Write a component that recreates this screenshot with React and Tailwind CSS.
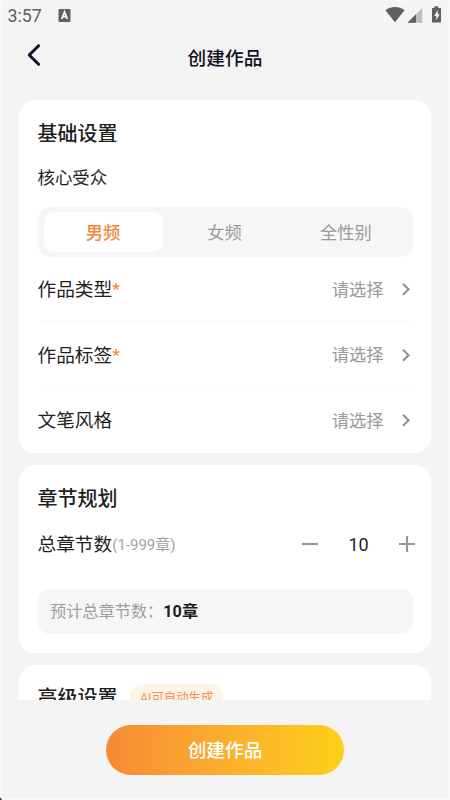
import { useState } from "react";

const audiences = ["男频", "女频", "全性别"];

const options = [
    { label: "作品类型", required: true },
    { label: "作品标签", required: true },
    { label: "文笔风格", required: false },
];

const StatusBar = () => {
    return (
        <div className="flex h-[30px] shrink-0 items-center justify-between pl-[7.5px] pr-2 text-[#606060]">
            <div className="flex items-center gap-[16px]">
                <span className="pt-px font-[Roboto] text-[17.8px] leading-[30px]">3:57</span>
                <svg width="13" height="13" viewBox="0 0 13 13">
                    <rect x="0.5" y="0" width="12" height="13" rx="1" fill="#606060" />
                    <path d="M3.8 9.8L6.5 3L9.2 9.8M4.8 7.6H8.2" fill="none" stroke="#f4f4f4" strokeWidth="1.8" />
                </svg>
            </div>
            <svg width="57" height="18" viewBox="0 0 57 18">
                <path d="M0.4 4.2C6.2 -0.2 13.8 -0.2 19.6 4.2L10 16.3Z" fill="#606060" />
                <path d="M37.2 2V16.7H22.5Z" fill="#bdbdbd" />
                <path d="M31 8.2V16.7H22.5Z" fill="#606060" />
                <path d="M49.5 0.3H53.2V2H56V16.5H47V2H49.5Z" fill="#606060" />
                <path d="M52.8 4L49.2 10H51.2V14.2L54.6 8.2H52.8Z" fill="#f4f4f4" />
            </svg>
        </div>
    );
};

const Header = () => {
    return (
        <header className="grid h-[70px] shrink-0 grid-cols-3 items-start px-[26px]">
            <button className="mt-[12px] w-[16px]" aria-label="返回">
                <svg width="16" height="26" viewBox="0 0 16 26" fill="none" stroke="#11112a" strokeWidth="3" strokeLinecap="round" strokeLinejoin="round">
                    <path d="M12.6 3.7L3.2 13L12.6 22.3" />
                </svg>
            </button>
            <h1 className="mt-[15px] text-center text-[18.7px] leading-[28px] font-medium text-[#11111f]">创建作品</h1>
        </header>
    );
};

const OptionRow = ({ label, required }) => {
    return (
        <div className="flex h-[65.4px] items-center justify-between">
            <span className="flex items-center pt-[2px] text-[18.7px]">
                {label}
                {required && <span className="font-[Roboto] text-[17px] font-medium text-[#f58a3c]">*</span>}
            </span>
            <span className="flex items-center gap-[17px] pr-[2px] text-[17.3px] text-[#9a9a9a]">
                <span className="pt-[3px]">请选择</span>
                <svg width="10" height="14" viewBox="0 0 10 14" fill="none" stroke="#8f8f8f" strokeWidth="2">
                    <path d="M2 1.8L7.6 7.3L2 12.8" />
                </svg>
            </span>
        </div>
    );
};

const BasicSettings = () => {
    const [active, setActive] = useState(0);

    return (
        <section className="h-[352.5px] shrink-0 rounded-2xl bg-white px-[18.5px] pt-[19px]">
            <h2 className="text-[20px] leading-[30px] font-medium">基础设置</h2>
            <p className="mt-[16px] text-[17.4px] leading-[26px]">核心受众</p>
            <div className="mt-[16px] flex h-[50px] rounded-xl bg-[#f6f6f6] px-[6px] py-[5px]">
                {audiences.map((name, index) => (
                    <button
                        key={name}
                        onClick={() => setActive(index)}
                        className={
                            index === active
                                ? "mr-[1.5px] w-[119px] rounded-[10px] bg-white pt-[3px] text-[17.3px] font-medium text-[#f5853a]"
                                : "flex-1 pt-[3px] text-[17.3px] text-[#9a9a9a]"
                        }
                    >
                        {name}
                    </button>
                ))}
            </div>
            <div className="divide-y divide-[#f9f9f9]">
                {options.map((option) => (
                    <OptionRow key={option.label} {...option} />
                ))}
            </div>
        </section>
    );
};

const ChapterPlan = () => {
    const [count, setCount] = useState(10);

    return (
        <section className="h-[187.5px] shrink-0 rounded-2xl bg-white px-[18.5px] pt-[19px]">
            <h2 className="text-[20px] leading-[30px] font-medium">章节规划</h2>
            <div className="-mr-[2.5px] mt-[14px] flex h-[32px] items-center justify-between">
                <span className="flex items-center pt-[2px] text-[18.7px]">
                    总章节数
                    <span className="text-[15px] text-[#a3a3a3]">(1-999章)</span>
                </span>
                <div className="flex items-center">
                    <button onClick={() => setCount(Math.max(1, count - 1))} aria-label="减少">
                        <svg width="16" height="16" viewBox="0 0 16 16" stroke="#999999" strokeWidth="2.2">
                            <path d="M0 8H16" />
                        </svg>
                    </button>
                    <span className="w-[81px] pt-px text-center font-[Roboto] text-[18px] leading-[28px]">{count}</span>
                    <button onClick={() => setCount(Math.min(999, count + 1))} aria-label="增加">
                        <svg width="16" height="16" viewBox="0 0 16 16" stroke="#999999" strokeWidth="2.2">
                            <path d="M0 8H16M8 0V16" />
                        </svg>
                    </button>
                </div>
            </div>
            <div className="mt-[28.5px] flex h-[45px] items-center rounded-xl bg-[#f6f6f6] pt-[3px] pl-[12.5px] text-[16.2px] text-[#9e9e9e]">
                预计总章节数：
                <span className="font-bold text-[#1c1c1c]">{count}章</span>
            </div>
        </section>
    );
};

const AdvancedSettings = () => {
    return (
        <section className="h-[120px] shrink-0 rounded-2xl bg-white px-[18.5px] pt-[18px]">
            <div className="flex items-start gap-[12.5px]">
                <h2 className="text-[20px] leading-[30px] font-medium">高级设置</h2>
                <span className="mt-px h-[26px] rounded-full bg-[#fff3e8] px-[10px] text-[12.4px] leading-[27px] text-[#f5914d]">
                    AI可自动生成
                </span>
            </div>
        </section>
    );
};

const App = () => {
    return (
        <div className="relative flex h-[800px] w-[450px] flex-col overflow-hidden bg-[#f4f4f4] font-[Roboto,'Noto_Sans_CJK_SC',sans-serif] text-[#1f1f1f] shadow-[inset_2px_1px_0_#f9f9f9,inset_-2px_-2px_0_#f9f9f9]">
            <StatusBar />
            <Header />
            <main className="flex h-[600px] shrink-0 flex-col gap-[12.5px] overflow-hidden px-[19px]">
                <BasicSettings />
                <ChapterPlan />
                <AdvancedSettings />
            </main>
            <footer className="flex h-[100px] shrink-0 items-center justify-center">
                <button className="h-[50px] w-[238px] rounded-full bg-linear-to-r from-[#f68936] to-[#fed015] pt-[2px] text-[18.7px] font-medium text-white">
                    创建作品
                </button>
            </footer>
            <svg width="3" height="3" viewBox="0 0 3 3" className="absolute bottom-0 left-0">
                <path d="M0 0L2 3H0Z" fill="#333333" />
            </svg>
        </div>
    );
};

export default App;
